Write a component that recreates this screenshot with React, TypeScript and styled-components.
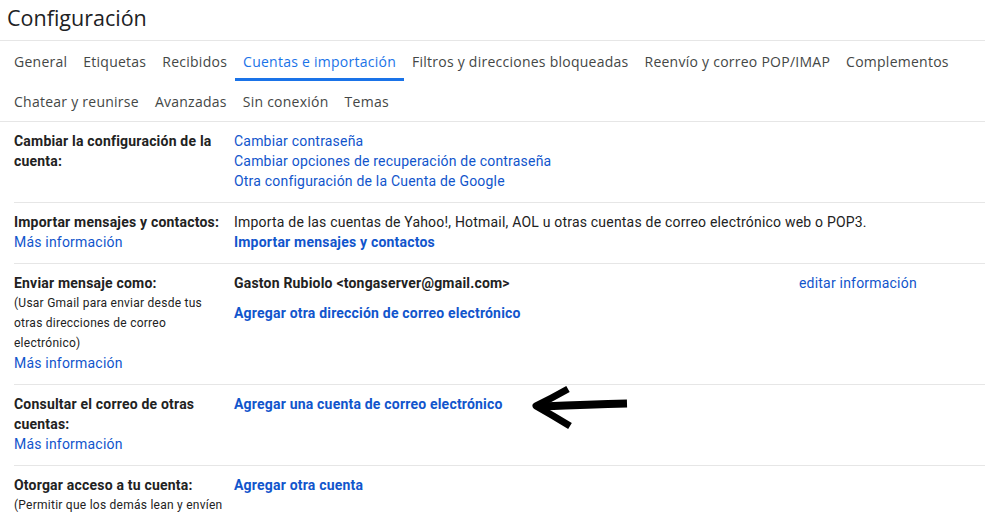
import * as React from "react";
import styled, { createGlobalStyle } from "styled-components";

const GlobalStyle = createGlobalStyle`
  html, body {
    margin: 0;
    padding: 0;
    background: #fff;
    overflow: hidden;
  }
  body {
    font-family: Roboto, "Liberation Sans", Arial, sans-serif;
    font-size: 14px;
    letter-spacing: 0.2px;
    color: #222;
  }
`;

const tabRows = [
  ["General", "Etiquetas", "Recibidos", "Cuentas e importación", "Filtros y direcciones bloqueadas", "Reenvío y correo POP/IMAP", "Complementos"],
  ["Chatear y reunirse", "Avanzadas", "Sin conexión", "Temas"],
];

export default function App() {
  return (
    <Page>
      <GlobalStyle />
      <Title>Configuración</Title>
      <Tabs>
        {tabRows.map((row, i) => (
          <TabRow key={i}>
            {row.map((t) => (
              <Tab key={t} active={t === "Cuentas e importación"}>{t}</Tab>
            ))}
          </TabRow>
        ))}
      </Tabs>
      <Settings>
        <Row>
          <Label>
            <b>Cambiar la configuración de la cuenta:</b>
          </Label>
          <Value>
            <Link>Cambiar contraseña</Link>
            <Link>Cambiar opciones de recuperación de contraseña</Link>
            <Link>Otra configuración de la Cuenta de Google</Link>
          </Value>
        </Row>
        <Row>
          <Label>
            <b>Importar mensajes y contactos:</b>
            <Link>Más información</Link>
          </Label>
          <Value>
            <span>Importa de las cuentas de Yahoo!, Hotmail, AOL u otras cuentas de correo electrónico web o POP3.</span>
            <Link bold>Importar mensajes y contactos</Link>
          </Value>
        </Row>
        <Row>
          <Label>
            <b>Enviar mensaje como:</b>
            <Hint>(Usar Gmail para enviar desde tus otras direcciones de correo electrónico)</Hint>
            <Link>Más información</Link>
          </Label>
          <Value>
            <Sender>
              <Address>Gaston Rubiolo &lt;tongaserver@gmail.com&gt;</Address>
              <Link>editar información</Link>
            </Sender>
            <Link bold spaced>Agregar otra dirección de correo electrónico</Link>
          </Value>
        </Row>
        <Row>
          <Label>
            <b>Consultar el correo de otras cuentas:</b>
            <Link>Más información</Link>
          </Label>
          <Value>
            <Annotated>
              <Link bold>Agregar una cuenta de correo electrónico</Link>
              <Arrow viewBox="0 0 100 45" width="100" height="45">
                <path d="M97 18.5 Q60 19.5 12 21.5" stroke="#000" strokeWidth="8" fill="none" strokeLinecap="butt" />
                <path d="M38 4 Q22 13 6 21 Q22 30 40 41" stroke="#000" strokeWidth="7" fill="none" strokeLinejoin="round" strokeLinecap="butt" />
              </Arrow>
            </Annotated>
          </Value>
        </Row>
        <Row>
          <Label>
            <b>Otorgar acceso a tu cuenta:</b>
            <Hint>(Permitir que los demás lean y envíen mensajes en tu nombre)</Hint>
          </Label>
          <Value>
            <Link bold>Agregar otra cuenta</Link>
          </Value>
        </Row>
      </Settings>
    </Page>
  );
}

const Page = styled.div`
  width: 985px;
  height: 518px;
  overflow: hidden;
`;

const Title = styled.h1`
  margin: 0;
  padding: 4px 0 0 7px;
  height: 36px;
  font-family: "Open Sans", Roboto, sans-serif;
  font-size: 21.5px;
  font-weight: 400;
  letter-spacing: 0;
  line-height: 28px;
  color: #202124;
  border-bottom: 1px solid #e6e6e6;
`;

const Tabs = styled.nav`
  padding-left: 6px;
  border-bottom: 1px solid #e6e6e6;
`;

const TabRow = styled.div`
  display: flex;
  height: 40px;
`;

const Tab = styled.div<{ active?: boolean }>`
  display: flex;
  align-items: center;
  padding: 0 8px;
  font-family: "Open Sans", Roboto, sans-serif;
  font-size: 14px;
  letter-spacing: 0.25px;
  white-space: nowrap;
  color: ${(p) => (p.active ? "#1a73e8" : "#444746")};
  box-shadow: ${(p) => (p.active ? "inset 0 -3px 0 #1a73e8" : "none")};
`;

const Settings = styled.div`
  padding-left: 14px;
`;

const Row = styled.div`
  display: flex;
  padding: 9px 0 11px;
  border-bottom: 1px solid #e6e6e6;
  &:last-child {
    border-bottom: none;
  }
  line-height: 20px;
`;

const Label = styled.div`
  width: 213px;
  flex: none;
  padding-right: 7px;
  display: flex;
  flex-direction: column;
  b {
    font-weight: 700;
    color: #222;
  }
`;

const Hint = styled.span`
  font-size: 12px;
  letter-spacing: 0.25px;
  color: #222;
`;

const Value = styled.div`
  flex: 1;
  display: flex;
  flex-direction: column;
`;

const Link = styled.span<{ bold?: boolean; spaced?: boolean }>`
  color: #15c;
  font-weight: ${(p) => (p.bold ? 700 : 400)};
  margin-top: ${(p) => (p.spaced ? "10px" : "0")};
  cursor: pointer;
`;

const Sender = styled.div`
  display: flex;
`;

const Address = styled.span`
  width: 565px;
  font-weight: 700;
  color: #222;
`;

const Annotated = styled.div`
  position: relative;
  display: flex;
`;

const Arrow = styled.svg`
  position: absolute;
  left: 296px;
  top: -9px;
`;
